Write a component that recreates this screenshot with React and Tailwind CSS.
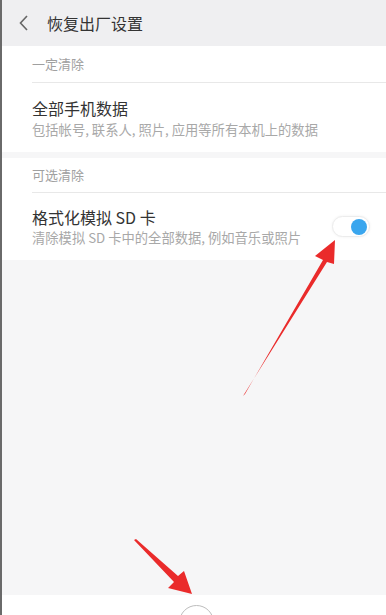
import React from "react";

export default function App() {
  const font = { fontFamily: '"Noto Sans CJK SC", "Noto Sans", sans-serif' };
  return (
    <div
      className="relative w-[386px] h-[615px] overflow-hidden bg-[#f6f6f7] border-l-2 border-[#6a6a6a] flex flex-col"
      style={font}
    >
      {/* Header */}
      <div className="h-[46px] bg-[#efeff1] flex items-center shrink-0">
        <svg width="12" height="18" viewBox="0 0 12 18" className="ml-[16px]">
          <path d="M9 2 L2.5 9 L9 16" fill="none" stroke="#666" strokeWidth="1.6" />
        </svg>
        <span className="ml-[17px] text-[16px] text-[#333] leading-none">恢复出厂设置</span>
      </div>

      {/* Section 1 */}
      <div className="bg-white pl-[30px] shrink-0">
        <div className="h-[37px] flex items-center text-[13px] text-[#a0a0a0] border-b border-[#e8e8e8]">
          一定清除
        </div>
        <div className="h-[69px] flex flex-col justify-center">
          <div className="text-[16px] text-[#333] leading-[22px]">全部手机数据</div>
          <div className="text-[13.3px] text-[#a8a8a8] leading-[18px] mt-[2px]">
            包括帐号, 联系人, 照片, 应用等所有本机上的数据
          </div>
        </div>
      </div>

      <div className="h-[6px] shrink-0" />

      {/* Section 2 */}
      <div className="bg-white pl-[30px] shrink-0">
        <div className="h-[35px] flex items-center text-[13px] text-[#a0a0a0] border-b border-[#e8e8e8]">
          可选清除
        </div>
        <div className="h-[67px] flex items-center pr-[16px]">
          <div className="flex-1 flex flex-col justify-center">
            <div className="text-[16px] text-[#333] leading-[22px]">格式化模拟 SD 卡</div>
            <div className="text-[13.3px] text-[#a8a8a8] leading-[18px] mt-[1px]">
              清除模拟 SD 卡中的全部数据, 例如音乐或照片
            </div>
          </div>
          <div className="w-[38px] h-[21px] rounded-full bg-white border border-[#ececec] shadow-[0_0_3px_rgba(0,0,0,0.06)] flex items-center justify-end pr-[2px]">
            <div className="w-[16px] h-[16px] rounded-full bg-[#3aa6ee]" />
          </div>
        </div>
      </div>

      <div className="flex-1" />

      {/* Bottom bar */}
      <div className="h-[20px] bg-white shrink-0 flex justify-center">
        <div className="w-[35px] h-[35px] rounded-full border border-[#bdbdbd] mt-[10px] ml-[4px]" />
      </div>

      {/* Red arrows overlay */}
      <svg
        className="absolute left-0 top-0 pointer-events-none"
        width="386"
        height="615"
        viewBox="0 0 386 615"
      >
        <polygon
          points="241,396 243,394 321,260 313,256 333,240 332,264 325,262"
          fill="#ea2b2b"
        />
        <polygon
          points="132,540 134,539 176,576 182,571 190,594 166,588 172,582"
          fill="#ea2b2b"
        />
      </svg>
    </div>
  );
}
